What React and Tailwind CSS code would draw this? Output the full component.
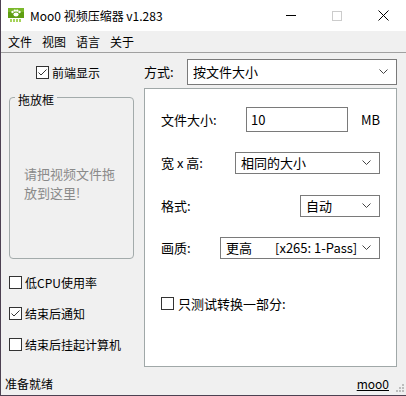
import React from 'react'

const font = "font-['Noto_Sans_CJK_SC','Noto_Sans',sans-serif]"

function Check({ checked }) {
  return (
    <span className="w-[13px] h-[13px] border border-[#333] bg-white flex items-center justify-center shrink-0">
      {checked && (
        <svg width="11" height="11" viewBox="0 0 11 11">
          <path d="M1.5 5.5 L4 8 L9.5 2.5" fill="none" stroke="#333" strokeWidth="1" />
        </svg>
      )}
    </span>
  )
}

function Chevron() {
  return (
    <svg width="9" height="6" viewBox="0 0 9 6" className="shrink-0">
      <path d="M0.5 0.5 L4.5 4.5 L8.5 0.5" fill="none" stroke="#444" strokeWidth="1" />
    </svg>
  )
}

function Select({ className, children }) {
  return (
    <div className={'flex items-center border border-[#7a7a7a] bg-white pl-[5px] pr-[8px] text-[13px] text-black ' + className}>
      <div className="flex-1 overflow-hidden whitespace-nowrap flex">{children}</div>
      <Chevron />
    </div>
  )
}

function AppIcon() {
  return (
    <svg width="16" height="15" viewBox="0 0 16 15">
      <rect x="0" y="0" width="16" height="10" fill="#5f9e12" />
      <rect x="0" y="0" width="16" height="4" fill="#7ab82a" />
      <ellipse cx="8" cy="6.5" rx="2.6" ry="2" fill="#fff" />
      <circle cx="4.5" cy="4" r="1.2" fill="#fff" />
      <circle cx="6.8" cy="2.6" r="1.2" fill="#fff" />
      <circle cx="9.2" cy="2.6" r="1.2" fill="#fff" />
      <circle cx="11.5" cy="4" r="1.2" fill="#fff" />
      <rect x="2" y="11" width="2" height="3" fill="#a6d35a" />
      <rect x="5" y="11" width="2" height="3" fill="#a6d35a" />
      <rect x="8" y="11" width="2" height="3" fill="#a6d35a" />
      <rect x="11" y="11" width="2" height="3" fill="#a6d35a" />
    </svg>
  )
}

export default function App() {
  return (
    <div className={'w-[406px] h-[396px] flex flex-col bg-[#f0f0f0] border-l border-b border-[#4d4152] text-black ' + font}>
      {/* title bar */}
      <div className="h-[31px] bg-white flex items-center shrink-0">
        <div className="ml-[7px] mr-[6px] mt-[-1px]">
          <AppIcon />
        </div>
        <span className="text-[12px] leading-none">Moo0 视频压缩器 v1.283</span>
        <div className="ml-auto flex items-center">
          <div className="w-[46px] h-[31px] flex items-center justify-center">
            <span className="w-[10px] h-px bg-black" />
          </div>
          <div className="w-[46px] h-[31px] flex items-center justify-center">
            <span className="w-[10px] h-[10px] border border-[#cccccc]" />
          </div>
          <div className="w-[46px] h-[31px] flex items-center justify-center">
            <svg width="11" height="11" viewBox="0 0 11 11">
              <path d="M0.5 0.5 L10.5 10.5 M10.5 0.5 L0.5 10.5" stroke="#000" strokeWidth="1" />
            </svg>
          </div>
        </div>
      </div>

      {/* menu bar */}
      <div className="h-[22px] flex items-center text-[12px] border-b border-[#a0a0a0] shrink-0">
        <span className="ml-[7px]">文件</span>
        <span className="ml-[10px]">视图</span>
        <span className="ml-[10px]">语言</span>
        <span className="ml-[10px]">关于</span>
      </div>

      {/* body */}
      <div className="flex flex-1 min-h-0">
        {/* left column */}
        <div className="w-[143px] shrink-0 flex flex-col">
          <div className="flex items-center mt-[13px] ml-[35px] h-[13px] text-[12px]">
            <Check checked />
            <span className="ml-[3px]">前端显示</span>
          </div>

          <div className="relative ml-[8px] mt-[18px] w-[125px] h-[162px] border border-[#a3abab] rounded-[4px]">
            <span className="absolute left-[5px] top-[-7px] px-[3px] bg-[#f0f0f0] text-[12px] leading-[18px]">拖放框</span>
            <div className="mt-[66px] ml-[14px] text-[13px] leading-[19px] text-[#8a8a8a]">
              请把视频文件拖<br />放到这里!
            </div>
          </div>

          <div className="flex flex-col gap-[18px] mt-[17px] ml-[8px] text-[12px]">
            <div className="flex items-center h-[13px]">
              <Check />
              <span className="ml-[3px]">低CPU使用率</span>
            </div>
            <div className="flex items-center h-[13px]">
              <Check checked />
              <span className="ml-[3px]">结束后通知</span>
            </div>
            <div className="flex items-center h-[13px]">
              <Check />
              <span className="ml-[3px]">结束后挂起计算机</span>
            </div>
          </div>
        </div>

        {/* right column */}
        <div className="flex-1 flex flex-col pr-[9px]">
          <div className="flex items-center mt-[6px] h-[26px]">
            <span className="text-[13px] w-[43px]">方式:</span>
            <Select className="flex-1 h-[26px]">按文件大小</Select>
          </div>

          <div className="mt-[3px] h-[279px] bg-white border border-[#a0a8a8] flex flex-col pl-[16px] pr-[16px] text-[13px]">
            <div className="flex items-center h-[25px] mt-[18px]">
              <span className="w-[85px]">文件大小:</span>
              <div className="w-[102px] h-[25px] border border-[#7a7a7a] flex items-center pl-[4px]">10</div>
              <span className="ml-auto">MB</span>
            </div>
            <div className="flex items-center h-[22px] mt-[20px]">
              <span>宽 x 高:</span>
              <Select className="ml-auto w-[145px] h-[22px]">相同的大小</Select>
            </div>
            <div className="flex items-center h-[22px] mt-[21px]">
              <span>格式:</span>
              <Select className="ml-auto w-[80px] h-[22px]">自动</Select>
            </div>
            <div className="flex items-center h-[22px] mt-[20px]">
              <span>画质:</span>
              <Select className="ml-auto w-[160px] h-[22px]">
                <span>更高</span>
                <span className="ml-[23px]">[x265: 1-Pass]</span>
              </Select>
            </div>
            <div className="flex items-center h-[13px] mt-[38px]">
              <Check />
              <span className="ml-[4px]">只测试转换一部分:</span>
            </div>
          </div>
        </div>
      </div>

      {/* status bar */}
      <div className="h-[26px] flex items-center pt-[3px] text-[12px] shrink-0 relative">
        <span className="ml-[4px]">准备就绪</span>
        <span className="ml-auto mr-[17px] underline">moo0</span>
        <svg width="9" height="9" viewBox="0 0 9 9" className="absolute right-[2px] bottom-[3px]">
          <rect x="7" y="1" width="2" height="2" fill="#bdbdbd" />
          <rect x="4" y="4" width="2" height="2" fill="#bdbdbd" />
          <rect x="7" y="4" width="2" height="2" fill="#bdbdbd" />
          <rect x="1" y="7" width="2" height="2" fill="#bdbdbd" />
          <rect x="4" y="7" width="2" height="2" fill="#bdbdbd" />
          <rect x="7" y="7" width="2" height="2" fill="#bdbdbd" />
        </svg>
      </div>
    </div>
  )
}
